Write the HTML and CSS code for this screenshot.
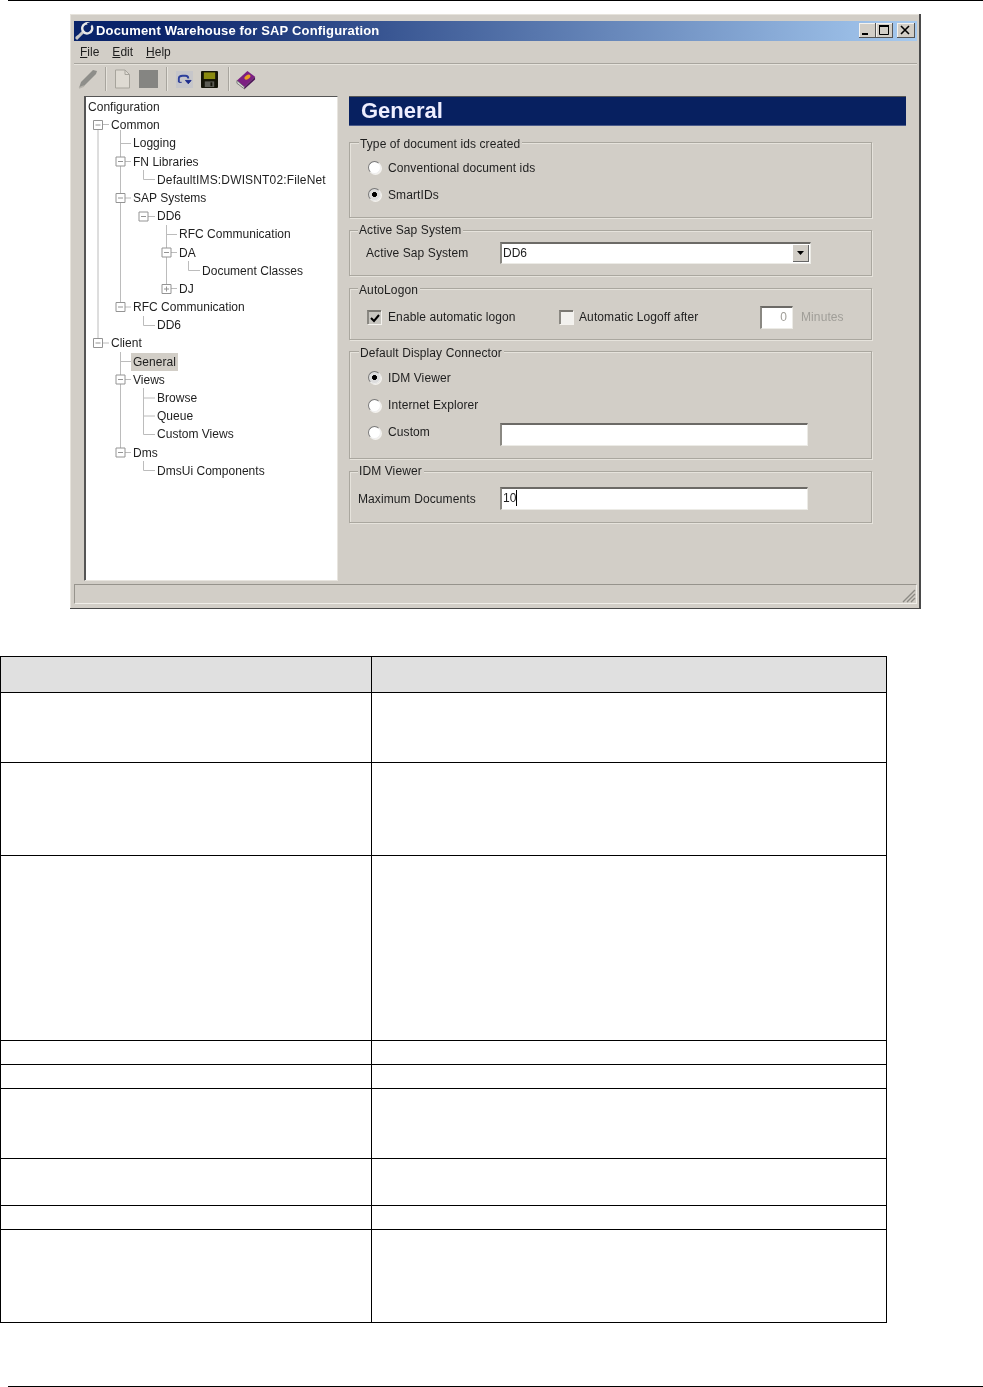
FILE: index.html
```html
<!DOCTYPE html>
<html lang="en">
<head>
<meta charset="utf-8">
<title>Document Warehouse for SAP Configuration</title>
<link rel="stylesheet" href="styles.css">
</head>
<body>
<div class="rule rule-top"></div>
<div class="window">
  <div class="titlebar">
    <svg class="title-icon" width="20" height="18" viewBox="0 0 20 18"><path d="M1 17 L9 9 M1.5 14 L3.5 16.5" stroke="#c8c8c8" stroke-width="3" fill="none"/><path d="M8 9 a5 5 0 1 1 6 2 a5 5 0 0 1 -6 -2z" fill="none" stroke="#e8e8e8" stroke-width="2.4"/><path d="M12 1 L18 1 L14 7z" fill="#0a246a"/></svg>
    <span class="title-text">Document Warehouse for SAP Configuration</span>
    <div class="win-buttons">
      <span class="win-btn"><svg width="16" height="14" viewBox="0 0 16 14"><rect x="3" y="10" width="6" height="2" fill="#000"/></svg></span>
      <span class="win-btn"><svg width="16" height="14" viewBox="0 0 16 14"><path d="M3.5 3.5h9v8h-9z" fill="none" stroke="#000"/><path d="M3 3h10" stroke="#000" stroke-width="2"/></svg></span>
      <span class="win-btn win-close"><svg width="16" height="14" viewBox="0 0 16 14"><path d="M4 3l8 8M12 3l-8 8" stroke="#000" stroke-width="1.6"/></svg></span>
    </div>
  </div>
  <div class="menubar"><span class="menu-file"><u>F</u>ile</span><span class="menu-edit"><u>E</u>dit</span><span class="menu-help"><u>H</u>elp</span></div>
  <div class="toolbar">
    <svg class="tb-pencil" width="20" height="22" viewBox="0 0 20 22"><path d="M1 20 L3 14 L15 2 L19 3 L18 6 L6 18z" fill="#8e8e8a"/><path d="M1 20 L6 18" stroke="#b5b2aa" stroke-width="1.5"/></svg>
    <span class="tb-sep tb-sep1"></span>
    <svg class="tb-doc" width="17" height="20" viewBox="0 0 17 20"><path d="M1.5 1 H11 L15.5 5.500 V19 H1.500z" fill="#dedad2" stroke="#a7a49c"/><path d="M11 1 V5.500 H15.500" fill="none" stroke="#a7a49c"/></svg>
    <span class="tb-square"></span>
    <span class="tb-sep tb-sep2"></span>
    <svg class="tb-arrow" width="17" height="17" viewBox="0 0 18 18"><rect width="18" height="18" fill="#c6c6ca"/><path d="M3 12 V8 Q3 5 7 5 H10 Q13 5 13 8" fill="none" stroke="#2c3f9c" stroke-width="2"/><path d="M10 10 H16 L13 13.500z M3 12 L6 12" fill="#1d2c8c" stroke="#1d2c8c"/></svg>
    <svg class="tb-save" width="17" height="17" viewBox="0 0 18 18"><rect width="18" height="18" rx="1" fill="#141408"/><rect x="3" y="1.500" width="12" height="7" fill="#8a8a10"/><rect x="4" y="11" width="10" height="6" fill="#5c5c54"/><rect x="10" y="12" width="2" height="4" fill="#141408"/></svg>
    <span class="tb-sep tb-sep3"></span>
    <svg class="tb-book" width="20" height="21" viewBox="0 0 21 22"><path d="M1 12 L12 2 L20 8 L9 19z" fill="#7c1f82"/><path d="M1 12 L9 19 L9 21 L1 15z" fill="#d8d8d8" stroke="#444" stroke-width=".6"/><path d="M9 19 L20 8 L20 11 L9 21z" fill="#4c1458"/><ellipse cx="12" cy="8.500" rx="3.500" ry="2" fill="#e8a020" transform="rotate(-35 12 8.500)"/></svg>
  </div>
  <div class="main">
    <div class="tree">
      <svg class="tree-lines" width="252" height="483" viewBox="0 0 252 483">
        <g transform="translate(-85 -97)" fill="none">
          <path class="conn" d="M98 129V338M120.500 130V302M120.500 143.500H131M103 124.500H109M125 161.500H131M125 198H131M125 307H131M103 343H109
            M143.500 170V179.500H155M148 216.500H155
            M166.500 225V284M166.500 234.500H177M171 252.500H177M171 288.500H177M188.500 261V270.500H200
            M143.500 316V325.500H155
            M120.500 352V448M120.500 361.500H131M125 379.500H131M125 452.500H131
            M143.500 388V434.500H155M143.500 398H155M143.500 416H155
            M143.500 461V470.500H155"/>
          <g class="exp">
            <path d="M93.500 120.500h9v9h-9z M95.500 125h5"/>
            <path d="M116 157h9v9h-9z M118 161.500h5"/>
            <path d="M116 193.500h9v9h-9z M118 198h5"/>
            <path d="M139 212h9v9h-9z M141 216.500h5"/>
            <path d="M162 248h9v9h-9z M164 252.500h5"/>
            <path d="M162 284.500h9v9h-9z M164 289h5 M166.500 286.500v5"/>
            <path d="M116 302.500h9v9h-9z M118 307h5"/>
            <path d="M93.500 338.500h9v9h-9z M95.500 343h5"/>
            <path d="M116 375h9v9h-9z M118 379.500h5"/>
            <path d="M116 448h9v9h-9z M118 452.500h5"/>
          </g>
        </g>
      </svg>
      <div class="node d0">Configuration</div>
      <div class="node d1">Common</div>
      <div class="node d2">Logging</div>
      <div class="node d2">FN Libraries</div>
      <div class="node d3 node-long">DefaultIMS:DWISNT02:FileNet</div>
      <div class="node d2">SAP Systems</div>
      <div class="node d3">DD6</div>
      <div class="node d4">RFC Communication</div>
      <div class="node d4">DA</div>
      <div class="node d5">Document Classes</div>
      <div class="node d4">DJ</div>
      <div class="node d2">RFC Communication</div>
      <div class="node d3">DD6</div>
      <div class="node d1">Client</div>
      <div class="node d2"><span class="selected">General</span></div>
      <div class="node d2">Views</div>
      <div class="node d3">Browse</div>
      <div class="node d3">Queue</div>
      <div class="node d3">Custom Views</div>
      <div class="node d2">Dms</div>
      <div class="node d3">DmsUi Components</div>
    </div>
    <div class="panel">
      <div class="panel-head">General</div>

      <div class="group g-type">
        <span class="legend">Type of document ids created</span>
        <div class="row row-radio"><span class="radio"></span><span>Conventional document ids</span></div>
        <div class="row row-radio"><span class="radio on"></span><span>SmartIDs</span></div>
      </div>

      <div class="group g-sap">
        <span class="legend legend-tight">Active Sap System</span>
        <div class="row row-sap"><span class="label label-sap">Active Sap System</span>
          <div class="field field-combo"><span>DD6</span><span class="combo-btn"><svg width="9" height="6" viewBox="0 0 9 6"><path d="M1 1h7L4.500 5z" fill="#000"/></svg></span></div>
        </div>
      </div>

      <div class="group g-logon">
        <span class="legend legend-low">AutoLogon</span>
        <div class="row row-logon">
          <span class="check on"><svg width="12" height="12" viewBox="0 0 12 12"><path d="M2 6l3 3 5-6" fill="none" stroke="#000" stroke-width="2"/></svg></span>
          <span class="logon-a">Enable automatic logon</span>
          <span class="check"></span>
          <span class="logon-b">Automatic Logoff after</span>
          <div class="field field-min">0</div>
          <span class="muted">Minutes</span>
        </div>
      </div>

      <div class="group g-conn">
        <span class="legend">Default Display Connector</span>
        <div class="row row-radio row-conn"><span class="radio on"></span><span>IDM Viewer</span></div>
        <div class="row row-radio row-conn"><span class="radio"></span><span>Internet Explorer</span></div>
        <div class="row row-radio row-conn"><span class="radio"></span><span class="label-custom">Custom</span><div class="field field-wide field-custom"></div></div>
      </div>

      <div class="group g-idm">
        <span class="legend legend-tight">IDM Viewer</span>
        <div class="row row-idm"><span class="label label-idm">Maximum Documents</span><div class="field field-wide"><span class="caret">10</span></div></div>
      </div>
    </div>
  </div>
  <div class="statusbar"><svg class="grip" width="14" height="14" viewBox="0 0 14 14"><path d="M13 1L1 13M13 5L5 13M13 9L9 13" stroke="#8c8a84" stroke-width="1.400"/></svg></div>
</div>

<table class="grid">
  <colgroup><col class="col-a"><col class="col-b"></colgroup>
  <tr class="head"><th></th><th></th></tr>
  <tr class="h70"><td></td><td></td></tr>
  <tr class="h93"><td></td><td></td></tr>
  <tr class="h185"><td></td><td></td></tr>
  <tr class="h24"><td></td><td></td></tr>
  <tr class="h24"><td></td><td></td></tr>
  <tr class="h70"><td></td><td></td></tr>
  <tr class="h47"><td></td><td></td></tr>
  <tr class="h24"><td></td><td></td></tr>
  <tr class="h93"><td></td><td></td></tr>
</table>
<div class="rule rule-bottom"></div>
</body>
</html>
```
FILE: styles.css
```css
* { box-sizing: border-box; }
html, body { margin: 0; padding: 0; background: #fff; }
body { font-family: "Liberation Sans", Arial, sans-serif; }

.rule { height: 1px; margin-left: 8px; background: #000; }
.rule-bottom { margin-top: 63px; }

/* window */
.window {
  width: 851px; height: 595px;
  margin: 13px 0 0 70px;
  padding: 7px 0 0 4px;
  background: #d2cec7;
  border-right: 2px solid #4a4a4a;
  border-bottom: 1px solid #4a4a4a;
  box-shadow: inset 1px 1px 0 #e6e3dc;
  font-size: 12px;
  letter-spacing: 0.1px;
  color: #1e1e1e;
  filter: blur(0.7px);
}
.titlebar {
  display: flex; align-items: flex-start;
  width: 843px; height: 20px;
  background: linear-gradient(90deg, #0a246a 0%, #0a246a 10%, #a6caf0 100%);
  color: #fff;
  font-weight: bold; font-size: 13px;
  letter-spacing: 0.17px;
}
.title-icon { margin: 1px 0 0 1px; flex: none; }
.title-text { margin-left: 1px; line-height: 19px; }
.win-buttons { display: flex; margin: 2px 2px 0 auto; }
.win-btn {
  display: flex; width: 17px; height: 15px;
  background: #d2cec7;
  border-right: 1px solid #555; border-bottom: 1px solid #555;
  box-shadow: inset 1px 1px 0 #f4f2ee;
}
.win-close { width: 18px; margin-left: 4px; }

.menubar {
  display: flex; align-items: center;
  width: 843px; height: 23px;
  border-bottom: 1px solid #a8a59e;
  box-shadow: 0 1px 0 #e6e3dc;
  padding-bottom: 1px;
  letter-spacing: 0;
}
.menu-file { margin-left: 6px; }
.menu-edit { margin-left: 13px; }
.menu-help { margin-left: 13px; }

.toolbar { display: flex; align-items: center; height: 32px; padding-bottom: 2px; }
.tb-pencil { margin-left: 4px; }
.tb-sep { display: block; width: 1px; height: 24px; background: #a8a59e; box-shadow: 1px 0 0 #e6e3dc; }
.tb-sep1 { margin-left: 7px; }
.tb-doc { margin-left: 8px; }
.tb-square { display: block; width: 19px; height: 18px; margin-left: 8px; background: #858582; }
.tb-sep2 { margin-left: 8px; }
.tb-arrow { margin-left: 9px; }
.tb-save { margin-left: 8px; }
.tb-sep3 { margin-left: 10px; }
.tb-book { margin-left: 7px; }

.main { display: flex; height: 485px; padding-left: 10px; }

/* tree */
.tree {
  position: relative;
  flex: none; width: 254px; height: 485px;
  padding-top: 1px;
  background: #fff;
  border-top: 1px solid #555; border-left: 1px solid #555;
  border-right: 1px solid #e8e5df; border-bottom: 1px solid #e8e5df;
  box-shadow: inset 1px 0 0 #555;
  letter-spacing: 0.02px;
  overflow: hidden;
}
.tree-lines { position: absolute; left: 0; top: 0; }
.conn { stroke: #bcbcbc; stroke-width: 1; }
.exp path { stroke: #949494; stroke-width: 1; fill: #fff; }
.node { position: relative; height: 18.2px; line-height: 18px; white-space: nowrap; }
.node-long { letter-spacing: 0.15px; }
.d0 { padding-left: 3px; }
.d1 { padding-left: 26px; }
.d2 { padding-left: 48px; }
.d3 { padding-left: 72px; }
.d4 { padding-left: 94px; }
.d5 { padding-left: 117px; }
.selected { display: inline-block; background: #d2cec7; padding: 0 2px; margin-left: -2px; }

/* right panel */
.panel { flex: none; width: 557px; margin-left: 11px; }
.panel-head {
  height: 30px; line-height: 29px;
  padding-left: 12px;
  background: #072060;
  box-shadow: inset 0 1px 0 #555, inset 0 -1px 0 #4a5a8a;
  color: #eef;
  font-size: 22px; font-weight: bold; letter-spacing: 0;
}
.group {
  position: relative;
  width: 523px;
  border: 1px solid #aaa79f;
  box-shadow: inset 1px 1px 0 #e6e3dc, 1px 1px 0 #e6e3dc;
}
.legend {
  position: absolute; left: 9px; top: -7px;
  padding: 0 2px 0 1px;
  background: #d2cec7;
  line-height: 16px;
  white-space: nowrap;
}
.legend-tight { left: 8px; top: -9px; }
.legend-low { left: 8px; top: -7px; }
.g-type { height: 76px; margin-top: 16px; padding-top: 11px; }
.g-sap { height: 46px; margin-top: 12px; padding-top: 11px; }
.g-logon { height: 52px; margin-top: 12px; padding-top: 17px; }
.g-conn { height: 108px; margin-top: 11px; padding-top: 12px; }
.g-idm { height: 52px; margin-top: 12px; padding-top: 15px; }

.row { display: flex; align-items: center; white-space: nowrap; }
.row-radio { height: 27px; padding-left: 18px; }
.row-conn { height: 27.400px; }
.radio {
  flex: none; width: 13px; height: 13px; margin-right: 7px;
  border-radius: 50%;
  background: #fff;
  border: 1px solid #777;
  border-right-color: #eee; border-bottom-color: #eee;
  box-shadow: 1px 1px 0 #f4f2ee;
}
.radio.on { background: radial-gradient(circle, #000 0, #000 2.200px, #ddd 2.800px); }
.row-sap { height: 22px; }
.label-sap { width: 150px; padding-left: 16px; flex: none; }
.field {
  flex: none;
  background: #fff;
  border-top: 2px solid #6c6a66; border-left: 2px solid #8a8882;
  border-right: 1px solid #ecebe6; border-bottom: 1px solid #ecebe6;
  letter-spacing: 0;
  line-height: 18px;
}
.field-combo {
  display: flex; align-items: center; justify-content: space-between;
  width: 311px; height: 22px; padding: 0 1px 2px;
}
.combo-btn {
  display: flex; align-items: center; justify-content: center;
  width: 16px; height: 17px; margin-bottom: -2px;
  background: #d2cec7;
  border-right: 1px solid #666; border-bottom: 1px solid #666;
}
.row-logon { height: 22px; padding-left: 17px; }
.check {
  flex: none; display: flex; align-items: center; justify-content: center;
  width: 14px; height: 14px;
  background: #f2f1ee;
  border-top: 2px solid #7a7872; border-left: 2px solid #8a8882;
  box-shadow: 1px 1px 0 #f4f2ee;
}
.check.on { background: #c8c6c0; }
.logon-a { width: 171px; margin-left: 7px; flex: none; }
.logon-b { width: 181px; margin-left: 6px; flex: none; }
.field-min { width: 33px; height: 23px; padding-right: 5px; text-align: right; color: #a09e98; }
.muted { margin-left: 8px; color: #a09e98; }
.label-custom { width: 112px; flex: none; }
.field-wide { width: 308px; height: 23px; }
.field-custom { margin-top: 4px; }
.row-idm { height: 23px; }
.label-idm { width: 150px; padding-left: 8px; flex: none; }
.caret { display: inline-block; padding-left: 1px; border-right: 1px solid #000; line-height: 16px; }

.statusbar {
  position: relative;
  width: 843px; height: 20px; margin-top: 3px;
  border-top: 1px solid #96938c; border-left: 1px solid #96938c;
  border-right: 1px solid #f0eee9; border-bottom: 1px solid #f0eee9;
}
.grip { position: absolute; right: 0; bottom: 0; }

/* table */
.grid { width: 886px; margin-top: 47px; border-collapse: collapse; table-layout: fixed; }
.grid th, .grid td { padding: 0; border: 1px solid #000; }
.col-a { width: 371px; }
.col-b { width: 515px; }
.head th { height: 36px; background: #e0e0e0; }
.h70 td { height: 70px; }
.h93 td { height: 93px; }
.h185 td { height: 185px; }
.h24 td { height: 24px; }
.h47 td { height: 47px; }
```
